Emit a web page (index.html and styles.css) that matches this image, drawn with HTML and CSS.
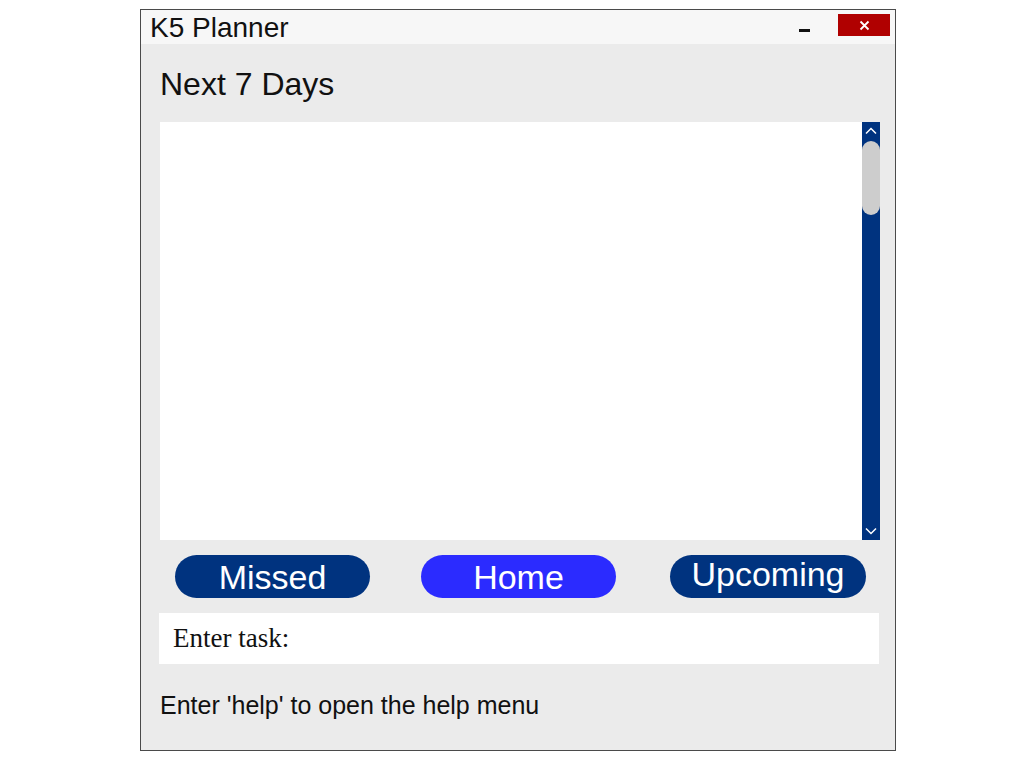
FILE: index.html
```html
<!DOCTYPE html>
<html>
<head>
<meta charset="utf-8">
<link rel="stylesheet" href="styles.css">
</head>
<body>
<div class="window">
  <div class="titlebar">
    <span class="title">K5 Planner</span>
    <div class="controls">
      <span class="minimize"></span>
      <span class="close">
        <svg width="11" height="11" viewBox="0 0 11 11"><path d="M1.5 1.5 L9.5 9.5 M9.5 1.5 L1.5 9.5" stroke="#fff" stroke-width="1.8" fill="none"/></svg>
      </span>
    </div>
  </div>
  <div class="content">
    <div class="heading">Next 7 Days</div>
    <div class="listbox">
      <div class="listarea"></div>
      <div class="scrollbar">
        <div class="arrow">
          <svg width="12" height="8" viewBox="0 0 12 8"><path d="M1 6.5 L6 1.5 L11 6.5" stroke="#fff" stroke-width="1.5" fill="none"/></svg>
        </div>
        <div class="thumb"></div>
        <div class="track"></div>
        <div class="arrow">
          <svg width="12" height="8" viewBox="0 0 12 8"><path d="M1 1.5 L6 6.5 L11 1.5" stroke="#fff" stroke-width="1.5" fill="none"/></svg>
        </div>
      </div>
    </div>
    <div class="buttons">
      <div class="btn missed">Missed</div>
      <div class="btn home">Home</div>
      <div class="btn upcoming">Upcoming</div>
    </div>
    <div class="input">Enter task:</div>
    <div class="help">Enter 'help' to open the help menu</div>
  </div>
</div>
</body>
</html>
```
FILE: styles.css
```css
html, body {
  margin: 0;
  padding: 0;
  background: #ffffff;
}
body {
  font-family: "Liberation Sans", Arial, sans-serif;
}
.window {
  margin: 9px 0 0 140px;
  width: 754px;
  height: 740px;
  border: 1px solid #4a4a4a;
  background: #ebebeb;
  display: flex;
  flex-direction: column;
}
.titlebar {
  height: 34px;
  background: #f7f7f7;
  display: flex;
  align-items: center;
  justify-content: space-between;
  padding-left: 9px;
  padding-right: 5px;
}
.title {
  font-size: 28px;
  color: #111;
  line-height: 34px;
  margin-top: 2px;
}
.controls {
  display: flex;
  align-items: center;
  align-self: flex-start;
  padding-top: 4px;
}
.minimize {
  width: 11px;
  height: 3px;
  background: #111;
  margin-right: 28px;
  margin-top: 11px;
}
.close {
  width: 52px;
  height: 22px;
  background: #b00000;
  display: flex;
  align-items: center;
  justify-content: center;
}
.content {
  flex: 1;
  padding: 0 15px 0 19px;
  display: flex;
  flex-direction: column;
}
.heading {
  font-size: 32px;
  line-height: 40px;
  padding-top: 20px;
  margin-bottom: 18px;
  color: #111;
}
.listbox {
  height: 418px;
  display: flex;
}
.listarea {
  flex: 1;
  background: #ffffff;
}
.scrollbar {
  width: 18px;
  background: #00337f;
  display: flex;
  flex-direction: column;
}
.arrow {
  height: 18px;
  display: flex;
  align-items: center;
  justify-content: center;
}
.thumb {
  height: 74px;
  background: #cdcdcd;
  border-radius: 9px;
  margin-top: 1px;
}
.track {
  flex: 1;
}
.buttons {
  height: 43px;
  padding: 15px 0;
  display: flex;
}
.btn {
  width: 195px;
  height: 43px;
  border-radius: 22px;
  background: #00337f;
  color: #ffffff;
  font-size: 34px;
  line-height: 45px;
  text-align: center;
}
.btn.missed {
  margin-left: 15px;
}
.btn.home {
  margin-left: 51px;
  background: #2b2bff;
}
.btn.upcoming {
  margin-left: 54px;
  width: 196px;
  line-height: 38px;
}
.input {
  height: 51px;
  background: #ffffff;
  font-family: "Liberation Serif", "Times New Roman", serif;
  font-size: 27px;
  line-height: 51px;
  padding-left: 14px;
  margin-left: -1px;
  margin-right: 1px;
  color: #111;
}
.help {
  font-size: 25px;
  line-height: 40px;
  padding-top: 21px;
  color: #111;
}
```
